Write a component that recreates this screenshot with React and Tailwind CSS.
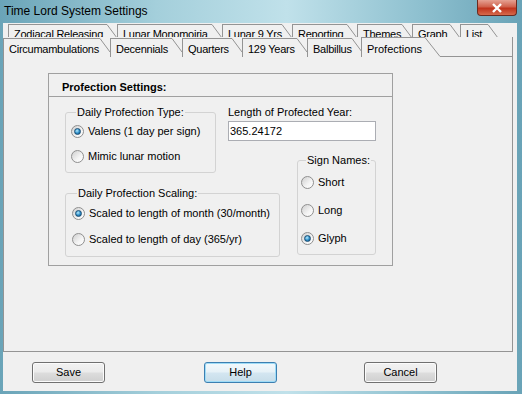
import React from "react";

const backTabs = [
  { label: "Zodiacal Releasing", w: "w-[109px]" },
  { label: "Lunar Monomoiria", w: "w-[105px]" },
  { label: "Lunar 9 Yrs", w: "w-[70px]" },
  { label: "Reporting", w: "w-[65px]" },
  { label: "Themes", w: "w-[55px]" },
  { label: "Graph", w: "w-[48px]" },
  { label: "List", w: "w-[38px]" },
];

const frontTabs = [
  { label: "Circumambulations", w: "w-[107px]" },
  { label: "Decennials", w: "w-[72px]" },
  { label: "Quarters", w: "w-[60px]" },
  { label: "129 Years", w: "w-[65px]" },
  { label: "Balbillus", w: "w-[54px]" },
];

function Tab({ label, w, pt }) {
  return (
    <div className={"flex h-[20px] shrink-0 " + w}>
      <div className={"flex-1 border-l border-t border-[#949494] pl-[5px] tracking-[-0.25px] whitespace-nowrap " + pt}>{label}</div>
      <svg width="10" height="20" className="shrink-0">
        <line x1="0" y1="0.5" x2="10" y2="14" stroke="#949494" />
      </svg>
    </div>
  );
}

function Radio({ checked, label }) {
  return (
    <div className="flex items-center gap-[4px]">
      <span className="flex h-[13px] w-[13px] shrink-0 items-center justify-center rounded-full border border-[#8f8f8f] bg-[linear-gradient(135deg,#cfcfcf,#f4f4f4_60%,#ffffff)]">
        {checked && (
          <span className="h-[7px] w-[7px] rounded-full border border-[#1b4e74] bg-[radial-gradient(circle_at_40%_35%,#b5ecff,#2b8bc6_55%,#0f4c78)]" />
        )}
      </span>
      <span>{label}</span>
    </div>
  );
}

function Group({ title, className, children }) {
  return (
    <fieldset className={"rounded-[3px] border border-[#d3d3d3] " + className}>
      <legend className="ml-[5px] px-[1px] leading-[13px]">{title}</legend>
      {children}
    </fieldset>
  );
}

function Button({ children, focus }) {
  return (
    <button
      className={
        "h-[21px] w-[73px] rounded-[3px] border text-[11px] " +
        (focus
          ? "border-[#3c7fb1] bg-[linear-gradient(#f3f9fc_0%,#e6f1f7_48%,#d4e6f1_52%,#c7dde9_100%)] shadow-[inset_0_0_0_1px_#9fdcf7]"
          : "border-[#707070] bg-[linear-gradient(#f2f2f2_0%,#ebebeb_48%,#dddddd_52%,#cfcfcf_100%)] shadow-[inset_0_0_0_1px_#fbfbfb]")
      }
    >
      {children}
    </button>
  );
}

export default function App() {
  return (
    <div className="relative flex h-[394px] w-[522px] flex-col bg-[linear-gradient(90deg,#6aa4b8,#a4cfdb_30%,#c0e1ea_55%,#8fc1d0_80%,#69a3b7)] font-['Liberation_Sans',Arial,sans-serif] text-[11px] text-black">
      {/* title bar */}
      <div className="flex h-[23px] shrink-0 items-start justify-between pl-[4px] pt-[2px]">
        <span className="text-[12px]">Time Lord System Settings</span>
        <div className="mr-[5px] -mt-[2px] flex h-[16px] w-[40px] items-center justify-center rounded-b-[4px] border border-t-0 border-[#6b2b20] bg-[linear-gradient(#e5a193,#d0614c_45%,#c0331c_55%,#d66a4c)]">
          <svg width="12" height="10" viewBox="0 0 12 10">
            <path d="M2 1 L10 9 M10 1 L2 9" stroke="#ffffff" strokeWidth="2.4" />
          </svg>
        </div>
      </div>

      {/* client */}
      <div className="ml-[3px] mr-[5px] mb-[3px] flex flex-1 flex-col bg-[#f0f0f0]">
        {/* back row of tabs */}
        <div className="flex h-[14px] overflow-hidden pl-[5px]">
          {backTabs.map((t) => (
            <div key={t.label} className="mt-[1px]">
              <Tab label={t.label} w={t.w} pt="pt-[1px]" />
            </div>
          ))}
        </div>
        {/* front row of tabs */}
        <div className="flex h-[20px]">
          {frontTabs.map((t) => (
            <div key={t.label} className="mt-[1px] h-[19px] overflow-hidden">
              <Tab label={t.label} w={t.w} pt="pt-[2px]" />
            </div>
          ))}
          <div className="flex h-[20px] w-[79px] shrink-0">
            <div className="flex-1 border-l border-t border-[#949494] pl-[5px] pt-[3px]">Profections</div>
            <svg width="15" height="20" className="shrink-0">
              <line x1="0" y1="0.5" x2="15" y2="19.5" stroke="#949494" />
            </svg>
          </div>
          <div className="mr-[4px] flex-1 border-b border-r border-[#949494]" />
        </div>

        {/* panel */}
        <div className="mr-[4px] h-[295px] shrink-0 border-b border-l border-r border-[#949494] pt-[16px] pl-[44px]">
          <div className="flex h-[193px] w-[345px] flex-col border border-[#a0a0a0]">
            <div className="h-[23px] shrink-0 border-b border-[#a0a0a0] pl-[13px] pt-[5px] font-bold">Profection Settings:</div>
            <div className="grid grid-cols-[151px_12px_52px_17px_79px] grid-rows-[35px_13px_19px_14px_70px] pl-[16px] pt-[9px]">
              <Group title="Daily Profection Type:" className="col-[1/2] row-[1/4] pl-[5px]">
                <div className="flex h-[25px] items-center">
                  <Radio checked label="Valens (1 day per sign)" />
                </div>
                <div className="flex h-[25px] items-center">
                  <Radio label="Mimic lunar motion" />
                </div>
              </Group>

              <div className="col-[3/6] row-[1/2] flex flex-col">
                <span className="leading-[13px]">Length of Profected Year:</span>
                <div className="mt-[2px] flex h-[20px] items-center border border-[#abadb3] bg-white pl-[1px]">365.24172</div>
              </div>

              <Group title="Sign Names:" className="col-[5/6] row-[3/6] mb-[2px] pl-[3px] pt-[1px]">
                <div className="flex h-[28px] items-center">
                  <Radio label="Short" />
                </div>
                <div className="flex h-[28px] items-center">
                  <Radio label="Long" />
                </div>
                <div className="flex h-[28px] items-center">
                  <Radio checked label="Glyph" />
                </div>
              </Group>

              <Group title="Daily Profection Scaling:" className="col-[1/4] row-[5/6] pl-[6px]">
                <div className="flex h-[26px] items-center">
                  <Radio checked label="Scaled to length of month (30/month)" />
                </div>
                <div className="flex h-[26px] items-center">
                  <Radio label="Scaled to length of day (365/yr)" />
                </div>
              </Group>
            </div>
          </div>
        </div>

        {/* buttons */}
        <div className="flex flex-1 items-start pt-[10px]">
          <div className="ml-[29px]">
            <Button>Save</Button>
          </div>
          <div className="ml-[99px]">
            <Button focus>Help</Button>
          </div>
          <div className="ml-[87px]">
            <Button>Cancel</Button>
          </div>
        </div>
      </div>
    </div>
  );
}
